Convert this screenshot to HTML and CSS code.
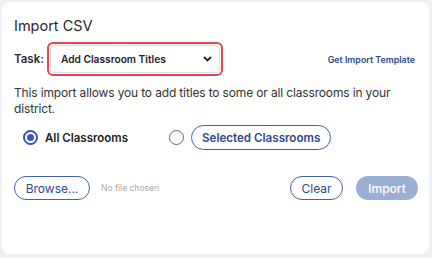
FILE: index.html
```html
<!DOCTYPE html>
<html>
<head>
<meta charset="utf-8">
<link rel="stylesheet" href="styles.css">
</head>
<body>
<div class="card">
  <h1 class="title">Import CSV</h1>
  <div class="task-row">
    <span class="task-label">Task:</span>
    <div class="select-focus">
      <div class="select">
        <span>Add Classroom Titles</span>
        <svg class="chev" width="9" height="6" viewBox="0 0 9 6"><path d="M1 1 L4.5 4.5 L8 1" fill="none" stroke="#222" stroke-width="1.8"/></svg>
      </div>
    </div>
    <a class="template">Get Import Template</a>
  </div>
  <p class="desc">This import allows you to add titles to some or all classrooms in your district.</p>
  <div class="radio-row">
    <label class="radio-opt">
      <span class="radio checked"></span>
      <span class="radio-text">All Classrooms</span>
    </label>
    <label class="radio-opt second">
      <span class="radio"></span>
      <span class="pill">Selected Classrooms</span>
    </label>
  </div>
  <div class="file-row">
    <span class="btn outline">Browse...</span>
    <span class="nofile">No file chosen</span>
    <span class="spacer"></span>
    <span class="btn outline clear">Clear</span>
    <span class="btn disabled">Import</span>
  </div>
</div>
</body>
</html>
```
FILE: styles.css
```css
* { box-sizing: border-box; }
html, body { margin: 0; padding: 0; }
body {
  background: #eef0f6;
  font-family: "Inter", "Noto Sans", sans-serif;
  color: #2a2a2a;
  width: 432px;
  height: 258px;
  padding: 2px 3px 4px 2px;
}
.card {
  background: #fff;
  border-radius: 8px;
  height: 252px;
  padding: 14px 11px 0 12px;
}
.title {
  margin: 0;
  font-size: 14.5px;
  font-weight: 400;
  line-height: 20px;
  color: #2a2a2a;
}
.task-row {
  display: flex;
  align-items: center;
  margin-top: 6px;
}
.task-label {
  font-size: 11.5px;
  font-weight: 600;
  margin-right: 3px;
}
.select-focus {
  border: 2px solid #e8444f;
  border-radius: 6px;
  padding: 1px;
  width: 176px;
  height: 34px;
}
.select {
  border: 1px solid #dcdde2;
  border-radius: 4px;
  height: 100%;
  display: flex;
  align-items: center;
  justify-content: space-between;
  padding: 0 7px 0 10px;
  font-size: 10.2px;
  font-weight: 600;
  color: #1d1d1d;
}
.template {
  margin-left: auto;
  margin-right: 3px;
  font-size: 8.9px;
  font-weight: 600;
  color: #2d4a8a;
}
.desc {
  margin: 9px 0 0;
  font-size: 12px;
  letter-spacing: -0.15px;
  line-height: 16px;
  color: #333;
}
.radio-row {
  display: flex;
  align-items: center;
  margin-top: 8px;
  padding-left: 9px;
}
.radio-opt {
  display: flex;
  align-items: center;
}
.radio-opt.second { margin-left: 41px; }
.radio {
  width: 15px;
  height: 15px;
  border-radius: 50%;
  border: 1.5px solid #666;
  display: inline-block;
  position: relative;
}
.radio.checked {
  border: 2px solid #3a56b0;
}
.radio.checked::after {
  content: "";
  position: absolute;
  left: 2px; top: 2px;
  width: 7px; height: 7px;
  border-radius: 50%;
  background: #3a56b0;
}
.radio-text {
  margin-left: 7px;
  font-size: 11.5px;
  font-weight: 600;
  color: #222;
}
.pill {
  margin-left: 7px;
  border: 1px solid #4065b0;
  border-radius: 13px;
  height: 25px;
  padding: 0 10px;
  display: flex;
  align-items: center;
  font-size: 11.6px;
  font-weight: 600;
  color: #2d4a8a;
}
.file-row {
  display: flex;
  align-items: center;
  margin-top: 26px;
}
.btn {
  height: 24px;
  border-radius: 12px;
  display: flex;
  align-items: center;
  justify-content: center;
  font-size: 12px;
}
.btn.outline {
  border: 1px solid #3f63b0;
  color: #2d4a8a;
  width: 76px;
}
.btn.clear { width: 53px; margin-right: 13px; }
.btn.disabled {
  background: #9aafd4;
  color: #fff;
  font-weight: 500;
  width: 62px;
}
.nofile {
  margin-left: 11px;
  font-size: 8.5px;
  color: #a8a8a8;
}
.spacer { flex: 1; }
```
